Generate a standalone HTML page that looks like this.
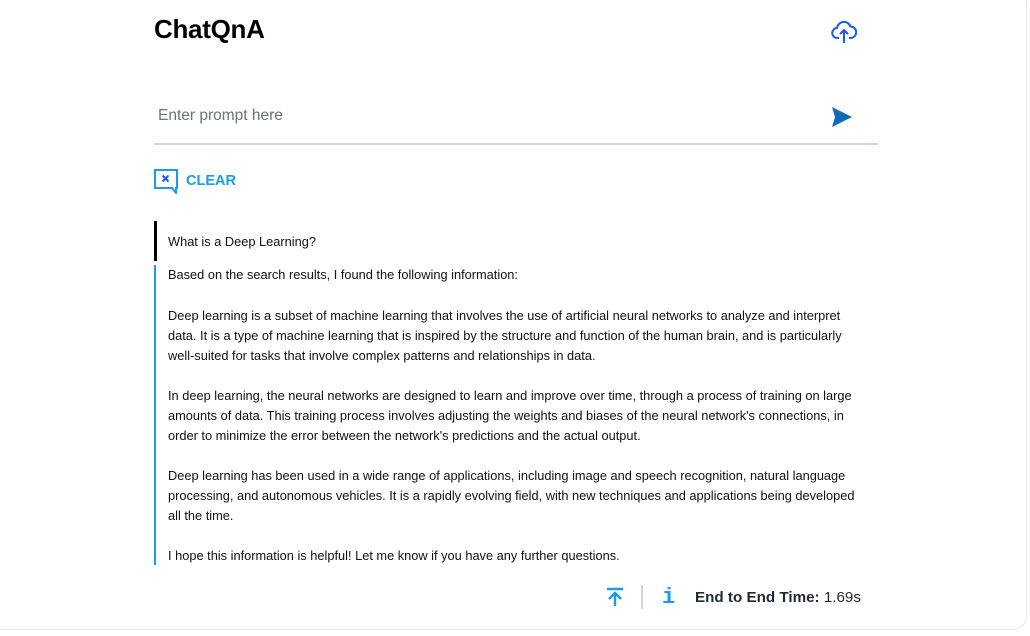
<!DOCTYPE html>
<html style="overflow:hidden;height:636px"><head><meta charset="utf-8"><style>
body{margin:0;width:1030px;height:636px;background:#fff;font-family:"Liberation Sans",sans-serif;position:relative;overflow:hidden}
.frame{position:absolute;left:-20px;top:-10px;width:1047px;height:640px;border:1px solid #e8e8ec;border-radius:14px;box-sizing:border-box}
.a{position:absolute;white-space:nowrap}
.msg{position:absolute;left:168px;font-size:12.8px;color:#111;line-height:20px;white-space:nowrap}
</style></head><body>
<div class="frame"></div>
<div class="a" style="left:154px;top:14px;font-size:26px;font-weight:bold;color:#000;letter-spacing:-0.3px">ChatQnA</div>
<svg class="a" style="left:831px;top:17px" width="26" height="28" viewBox="0 0 26 28"><path d="M8 21H6.5a5 5 0 0 1-.5-10 7 7 0 0 1 13.5-1.5A5 5 0 0 1 19.5 21H18" fill="none" stroke="#1a5ce6" stroke-width="2" stroke-linejoin="round"/><path d="M13 26V13M9 17l4-4 4 4" fill="none" stroke="#1a5ce6" stroke-width="2"/></svg>
<div class="a" style="left:158px;top:107px;font-size:15.5px;color:#6b7280">Enter prompt here</div>
<svg class="a" style="left:832px;top:107px" width="21" height="21" viewBox="0 0 21 21"><path d="M0 0L20 10L0 20L3 10Z" fill="#0e6bb8"/></svg>
<div class="a" style="left:154px;top:143px;width:724px;height:2px;background:#d1d5db"></div>
<svg class="a" style="left:154px;top:169px" width="25" height="25" viewBox="0 0 25 25"><path d="M1 1H23V19H22V24L18 19H1Z" fill="none" stroke="#1a9bf0" stroke-width="2"/><path d="M8.5 6.5l6 6M14.5 6.5l-6 6" stroke="#1a5ce6" stroke-width="2"/></svg>
<div class="a" style="left:186px;top:173px;font-size:14.5px;font-weight:bold;color:#1a9bf0">CLEAR</div>
<div class="a" style="left:154px;top:221px;width:3px;height:40px;background:#000"></div>
<div class="msg" style="top:232px">What is a Deep Learning?</div>
<div class="a" style="left:154px;top:265px;width:2px;height:300px;background:#1a9bf0"></div>
<div class="msg" style="top:265px">Based on the search results, I found the following information:</div>
<div class="msg" style="top:306px">Deep learning is a subset of machine learning that involves the use of artificial neural networks to analyze and interpret<br>data. It is a type of machine learning that is inspired by the structure and function of the human brain, and is particularly<br>well-suited for tasks that involve complex patterns and relationships in data.</div>
<div class="msg" style="top:386px">In deep learning, the neural networks are designed to learn and improve over time, through a process of training on large<br>amounts of data. This training process involves adjusting the weights and biases of the neural network's connections, in<br>order to minimize the error between the network's predictions and the actual output.</div>
<div class="msg" style="top:466px">Deep learning has been used in a wide range of applications, including image and speech recognition, natural language<br>processing, and autonomous vehicles. It is a rapidly evolving field, with new techniques and applications being developed<br>all the time.</div>
<div class="msg" style="top:546px">I hope this information is helpful! Let me know if you have any further questions.</div>
<svg class="a" style="left:606px;top:587px" width="18" height="20" viewBox="0 0 18 20"><path d="M1 2H17M9 19V6M3 12l6-6 6 6" fill="none" stroke="#1a9bf0" stroke-width="2.4"/></svg>
<div class="a" style="left:641px;top:585px;width:2px;height:24px;background:#d1d5db"></div>
<div class="a" style="left:662px;top:585px;font-size:22px;font-weight:bold;color:#1a9bf0;font-family:'Liberation Mono',monospace">i</div>
<div class="a" style="left:695px;top:589px;font-size:15.2px;color:#1f2937"><b>End to End Time:</b> 1.69s</div>
</body></html>
